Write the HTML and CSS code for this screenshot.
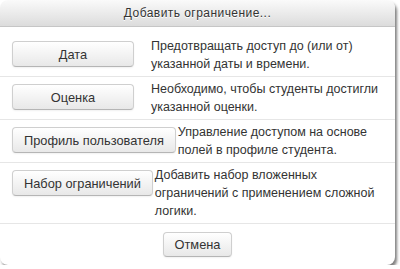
FILE: index.html
```html
<!DOCTYPE html>
<html lang="ru">
<head>
  <meta charset="UTF-8">
  <title>Добавить ограничение</title>
  <link rel="stylesheet" href="styles.css">
</head>
<body>
  <div class="dialog">
    <div class="dialog-header">Добавить ограничение...</div>
    <div class="dialog-body">
      <div class="option-row">
        <div class="option-button"><button class="btn btn-fixed">Дата</button></div>
        <div class="option-desc">Предотвращать доступ до (или от) указанной даты и времени.</div>
      </div>
      <div class="option-row">
        <div class="option-button"><button class="btn btn-fixed">Оценка</button></div>
        <div class="option-desc">Необходимо, чтобы студенты достигли указанной оценки.</div>
      </div>
      <div class="option-row">
        <div class="option-button"><button class="btn">Профиль пользователя</button></div>
        <div class="option-desc">Управление доступом на основе полей в профиле студента.</div>
      </div>
      <div class="option-row">
        <div class="option-button"><button class="btn">Набор ограничений</button></div>
        <div class="option-desc">Добавить набор вложенных ограничений с применением сложной логики.</div>
      </div>
    </div>
    <div class="dialog-footer">
      <button class="btn">Отмена</button>
    </div>
  </div>
</body>
</html>
```

FILE: styles.css
```css
body {
  margin: 0;
  background: #fff;
  font-family: 'Liberation Sans', Arial, sans-serif;
  color: #333;
}

.dialog {
  width: 395px;
  background: #fff;
  border-radius: 8px;
  box-shadow: 2px 3px 3px rgba(0, 0, 0, 0.5);
  overflow: hidden;
}

.dialog-header {
  height: 26px;
  line-height: 27px;
  text-align: center;
  font-size: 12px;
  letter-spacing: 0.45px;
  color: #333;
  text-shadow: 0 1px 0 #fff;
  background: linear-gradient(#fafafa, #dcdcdc);
  border-bottom: 1px solid #c6c6c6;
}

.dialog-body {
  padding-top: 7px;
}

.option-row {
  display: flex;
  align-items: flex-start;
  padding: 3px 10px 3px 12px;
  border-bottom: 1px solid #e6e6e6;
}

.option-button {
  min-width: 137px;
  padding-top: 4px;
}

.option-desc {
  flex: 1;
  margin-left: 2px;
  font-size: 12.5px;
  line-height: 18px;
}

.btn {
  height: 26px;
  padding: 0 11px;
  font-family: 'Liberation Sans', Arial, sans-serif;
  font-size: 12.8px;
  color: #333;
  background: linear-gradient(#fff, #e8e8e8);
  border: 1px solid #cfcfcf;
  border-bottom-color: #b5b5b5;
  border-radius: 4px;
  box-shadow: inset 0 1px 0 rgba(255, 255, 255, 0.2), 0 1px 2px rgba(0, 0, 0, 0.06);
  cursor: pointer;
}

.btn-fixed {
  width: 122px;
}

.dialog-footer {
  display: flex;
  justify-content: center;
  padding: 8px 0 8px;
}

.dialog-footer .btn {
  height: 25px;
  width: 69px;
  padding: 0;
}
```
